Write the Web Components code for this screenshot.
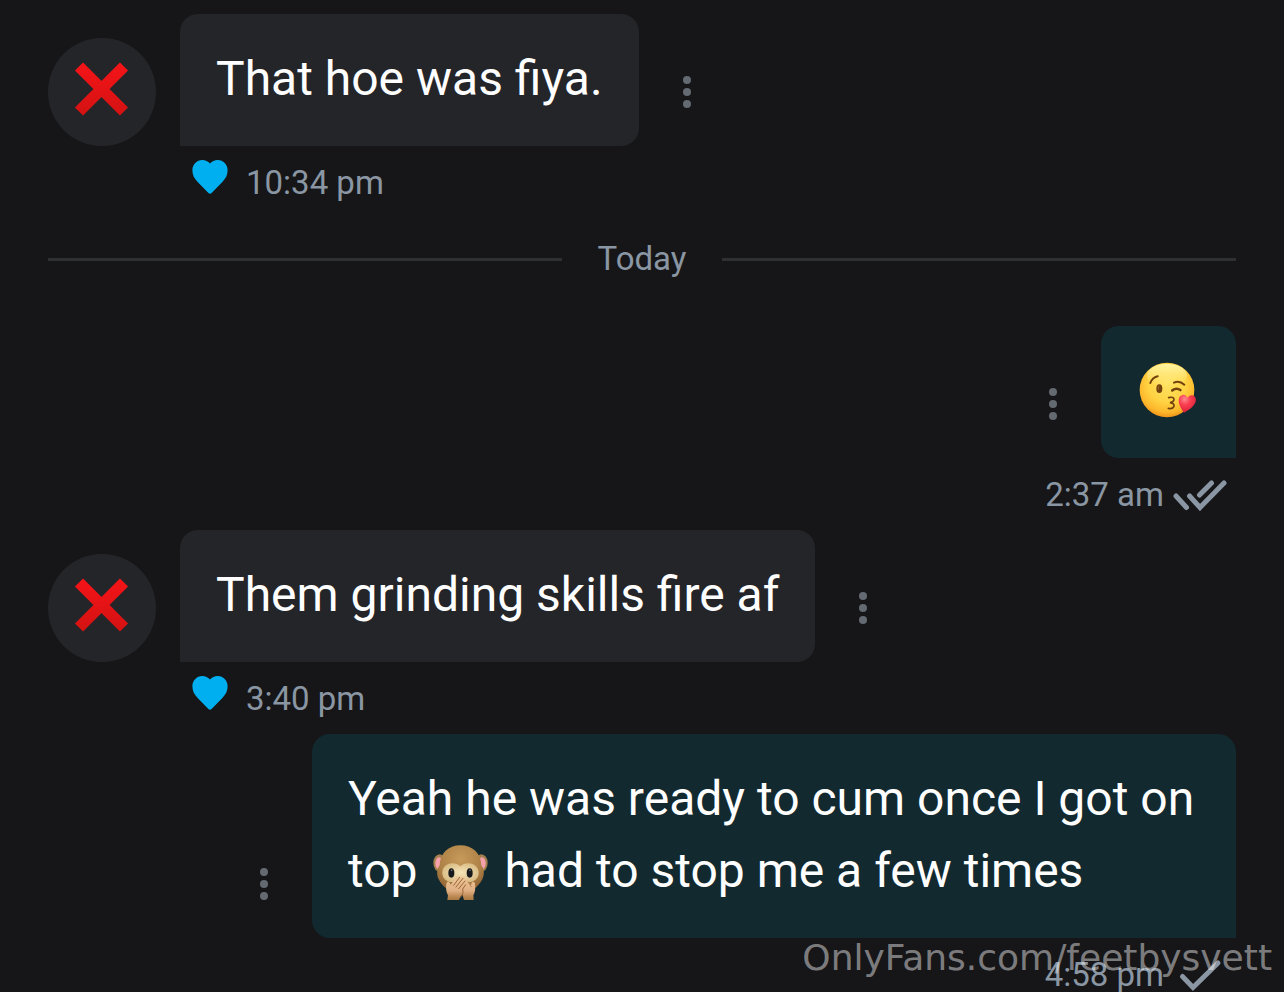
<!DOCTYPE html>
<html lang="en">
<head>
<meta charset="utf-8">
<meta name="viewport" content="width=device-width, initial-scale=1">
<title>Messages</title>
<style>
  body {
    margin: 0;
    background: #161618;
    color: #fefefe;
    font-family: Roboto, "Liberation Sans", sans-serif;
    --muted: #8a96a3;
    --accent: #00aff0;
    --bubble-in: #242529;
    --bubble-out: #132930;
    --line: #2e3034;
    --dots: #646a72;
  }
</style>
</head>
<body>

<chat-thread>
  <chat-message time="10:34 pm" liked>That hoe was fiya.</chat-message>
  <day-divider>Today</day-divider>
  <chat-message outgoing time="2:37 am" status="read"><chat-emoji name="kiss"></chat-emoji></chat-message>
  <chat-message time="3:40 pm" liked>Them grinding skills fire af</chat-message>
  <chat-message outgoing time="4:58 pm" status="sent">Yeah he was ready to cum once I got on top <chat-emoji name="monkey"></chat-emoji> had to stop me a few times</chat-message>
  <page-watermark slot="overlay">OnlyFans.com/feetbysvett</page-watermark>
</chat-thread>

<script>
/**
 * Chat Thread
 * Scroll area that stacks messages and dividers.
 */
class ChatThread extends HTMLElement {
  constructor() {
    super();
    this.attachShadow({ mode: 'open' });
  }

  connectedCallback() {
    this.shadowRoot.innerHTML = `
      <style>
        :host {
          display: block;
          position: relative;
          box-sizing: border-box;
          height: 100vh;
          overflow: hidden;
        }

        .list {
          display: flex;
          flex-direction: column;
          padding: 14px 48px 0;
        }
      </style>
      <main class="list"><slot></slot></main>
      <slot name="overlay"></slot>
    `;
  }
}

/**
 * Day Divider
 * Label between two horizontal rules.
 */
class DayDivider extends HTMLElement {
  constructor() {
    super();
    this.attachShadow({ mode: 'open' });
  }

  connectedCallback() {
    this.shadowRoot.innerHTML = `
      <style>
        :host {
          display: flex;
          align-items: center;
          gap: 36px;
          padding: 17px 0 43px;
          color: var(--muted);
          font-size: 33px;
          line-height: 48px;
        }

        .rule {
          flex: 1;
          height: 3px;
          background: var(--line);
        }
      </style>
      <span class="rule"></span>
      <slot></slot>
      <span class="rule"></span>
    `;
  }
}

/**
 * User Avatar
 * Round picture next to incoming messages.
 */
class UserAvatar extends HTMLElement {
  constructor() {
    super();
    this.attachShadow({ mode: 'open' });
  }

  connectedCallback() {
    this.shadowRoot.innerHTML = `
      <style>
        :host {
          display: block;
          flex: none;
          width: 108px;
          height: 108px;
          border-radius: 50%;
          background: var(--bubble-in);
        }

        svg {
          display: block;
        }
      </style>
      <svg width="108" height="108" viewBox="0 0 108 108" role="img" aria-label="Avatar">
        <defs>
          <linearGradient id="red" gradientUnits="userSpaceOnUse" x1="0" y1="25" x2="0" y2="78">
            <stop offset="0" stop-color="#f51418"/>
            <stop offset="1" stop-color="#d31212"/>
          </linearGradient>
        </defs>
        <path d="M31 28.5 76 73.5M76 28.5 31 73.5" stroke="url(#red)" stroke-width="11.5"/>
      </svg>
    `;
  }
}

/**
 * Chat Message
 * One bubble with its menu button and the line below it.
 *
 * Attributes: outgoing, liked, time, status ("sent" | "read")
 */
class ChatMessage extends HTMLElement {
  constructor() {
    super();
    this.attachShadow({ mode: 'open' });
  }

  connectedCallback() {
    this.render();
  }

  statusIcon() {
    const path = this.getAttribute('status') === 'read'
      ? 'M16.5 21 27 32.5 51 8M26.5 20 38.5 8M3 21 13.5 32.5'
      : 'M9.5 21.5 20 32.5 45 8';
    return `
      <svg class="status" width="54" height="36" viewBox="0 2 54 36" role="img" aria-label="${this.getAttribute('status')}">
        <path d="${path}" fill="none" stroke="currentColor" stroke-width="5" stroke-linecap="round"/>
      </svg>
    `;
  }

  render() {
    const outgoing = this.hasAttribute('outgoing');
    const liked = this.hasAttribute('liked');

    this.shadowRoot.innerHTML = `
      <style>
        :host {
          display: block;
        }

        .row {
          display: flex;
          align-items: flex-end;
        }

        .bubble {
          padding: 29px 36px 31px;
          border-radius: 18px 18px 18px 0;
          background: var(--bubble-in);
          font-size: 48px;
          line-height: 72px;
        }

        user-avatar {
          margin-right: 24px;
        }

        .menu {
          flex: none;
          display: flex;
          align-items: center;
          justify-content: center;
          width: 24px;
          height: 108px;
          margin: 0 36px;
          padding: 0;
          border: 0;
          background: none;
          color: var(--dots);
          cursor: pointer;
        }

        .meta {
          display: flex;
          align-items: center;
          padding: 13px 0 11px 144px;
          color: var(--muted);
          font-size: 33px;
          line-height: 48px;
        }

        .like {
          align-self: flex-start;
          margin-right: 18px;
          padding: 0;
          border: 0;
          background: none;
          color: var(--accent);
          cursor: pointer;
        }

        .like svg {
          display: block;
        }

        :host([outgoing]) .row {
          flex-direction: row-reverse;
          padding-left: 168px;
        }

        :host([outgoing]) .bubble {
          border-radius: 18px 18px 0 18px;
          background: var(--bubble-out);
        }

        :host([outgoing]) .meta {
          justify-content: flex-end;
          gap: 9px;
          padding: 13px 9px 11px 0;
        }
      </style>

      <div class="row">
        ${outgoing ? '' : '<user-avatar></user-avatar>'}
        <div class="bubble"><slot></slot></div>
        <button class="menu" type="button" aria-label="Message options">
          <svg width="8" height="32" viewBox="0 0 8 32" fill="currentColor">
            <circle cx="4" cy="4" r="4"/>
            <circle cx="4" cy="16" r="4"/>
            <circle cx="4" cy="28" r="4"/>
          </svg>
        </button>
      </div>
      <div class="meta">
        ${liked ? `
          <button class="like" type="button" aria-label="Like">
            <svg width="36" height="36" viewBox="0 1 36 36" fill="currentColor">
              <path d="M18 5.6C16 3.2 13.4 2 10.3 2 4.8 2 .4 6.5.4 12.2c0 4.5 1.7 8 5 11.5L16.4 34.9q1.6 1.5 3.2 0L30.6 23.7c3.3-3.5 5-7 5-11.5C35.6 6.500 31.2 2 25.7 2 22.6 2 20 3.2 18 5.6Z"/>
            </svg>
          </button>` : ''}
        <time>${this.getAttribute('time')}</time>
        ${outgoing ? this.statusIcon() : ''}
      </div>
    `;
  }
}

/**
 * Chat Emoji
 * Inline picture drawn at text size.
 */
const EMOJI = {
  kiss: {
    label: 'Face blowing a kiss',
    viewBox: '21 45 189 174',
    art: `
      <defs>
        <radialGradient id="skin" cx=".5" cy=".38" r=".63">
          <stop offset="0" stop-color="#ffe264"/>
          <stop offset=".55" stop-color="#ffd343"/>
          <stop offset=".84" stop-color="#fdb62b"/>
          <stop offset="1" stop-color="#ed8f16"/>
        </radialGradient>
        <linearGradient id="shine" x1="0" y1="0" x2="0" y2="1">
          <stop offset="0" stop-color="#fff8b0" stop-opacity=".9"/>
          <stop offset="1" stop-color="#fff08a" stop-opacity="0"/>
        </linearGradient>
        <radialGradient id="love" cx=".35" cy=".25" r=".8">
          <stop offset="0" stop-color="#ff8a90"/>
          <stop offset=".4" stop-color="#f93f50"/>
          <stop offset="1" stop-color="#d91d36"/>
        </radialGradient>
      </defs>
      <circle cx="111" cy="120" r="82" fill="url(#skin)"/>
      <ellipse cx="111" cy="76" rx="60" ry="34" fill="url(#shine)"/>
      <g fill="none" stroke="#71420d" stroke-width="6" stroke-linecap="round">
        <path d="M61 99Q67 83 83 79"/>
        <path d="M132 98Q148 91 163 104"/>
        <path d="M127 121Q139 112 151 120" stroke-width="8"/>
        <path d="M116 143Q132 139 132 149 131 156 120 158 134 160 132 169 128 178 115 175" stroke-width="5"/>
      </g>
      <ellipse cx="88" cy="116" rx="9" ry="13" fill="#71420d"/>
      <path d="M88 107q-5 4-3 12" fill="none" stroke="#a06b23" stroke-width="3"/>
      <path d="M162 188C151 174 140 151 150 139 159 130 170 134 172 144 178 133 193 133 197 145 202 161 181 179 162 188Z" fill="url(#love)"/>
    `
  },
  monkey: {
    label: 'Speak-no-evil monkey',
    viewBox: '14 30 189 174',
    art: `
      <defs>
        <radialGradient id="fur" cx=".5" cy=".3" r=".72">
          <stop offset="0" stop-color="#c69a5a"/>
          <stop offset=".65" stop-color="#ad8046"/>
          <stop offset="1" stop-color="#8a5e30"/>
        </radialGradient>
        <radialGradient id="mask" cx=".5" cy=".5" r=".6">
          <stop offset="0" stop-color="#f6e4b8"/>
          <stop offset="1" stop-color="#d7b980"/>
        </radialGradient>
        <linearGradient id="hand" gradientUnits="userSpaceOnUse" x1="0" y1="122" x2="0" y2="196">
          <stop offset="0" stop-color="#efc99a"/>
          <stop offset=".6" stop-color="#e0b084"/>
          <stop offset=".82" stop-color="#c08c58"/>
          <stop offset="1" stop-color="#a8763f"/>
        </linearGradient>
      </defs>
      <ellipse cx="46" cy="84" rx="19" ry="26" fill="#a4804e"/>
      <ellipse cx="171" cy="84" rx="19" ry="26" fill="#a4804e"/>
      <ellipse cx="44" cy="85" rx="11" ry="18" fill="#f5a0aa"/>
      <ellipse cx="173" cy="85" rx="11" ry="18" fill="#f5a0aa"/>
      <path d="M108 31C72 31 47 55 46 91 37 103 36 119 43 133 54 156 77 174 108 174 139 174 163 156 174 133 181 119 180 103 171 91 170 55 145 31 108 31Z" fill="url(#fur)"/>
      <path d="M108 94C91 77 56 84 54 111 53 127 63 137 76 141H140C154 137 164 127 163 111 161 84 125 77 108 94Z" fill="url(#mask)"/>
      <g fill="#17191d">
        <ellipse cx="81" cy="114" rx="9" ry="14"/>
        <ellipse cx="136" cy="114" rx="9" ry="14"/>
      </g>
      <circle cx="82" cy="106" r="2.5" fill="#7d7d80"/>
      <circle cx="137" cy="106" r="2.5" fill="#7d7d80"/>
      <path d="M148 195 147 181Q155 166 152 146 149 137 142 143L140 151 123 129Q117 125 112 130L110 165 119 195Z" fill="url(#hand)"/>
      <path d="M69 195 71 181Q63 166 66 146 69 137 76 143L79 149 97 126Q102 121 106 126 113 122 117 129 124 130 122 137 128 141 123 149L115 162Q118 178 108 186L104 195Z" fill="url(#hand)"/>
      <g fill="none" stroke="#9a6638" stroke-width="3" stroke-linecap="round">
        <path d="M106 127 88 151M116 130 95 156M122 138 103 161"/>
        <path d="M124 149 115 162Q119 178 108 187"/>
        <path d="M131 141 141 155" stroke-width="2"/>
      </g>
    `
  }
};

class ChatEmoji extends HTMLElement {
  constructor() {
    super();
    this.attachShadow({ mode: 'open' });
  }

  connectedCallback() {
    const emoji = EMOJI[this.getAttribute('name')];
    this.shadowRoot.innerHTML = `
      <style>
        :host {
          display: inline-block;
          width: 63px;
          height: 58px;
          line-height: 0;
          vertical-align: -16px;
        }

        svg {
          overflow: visible;
        }
      </style>
      <svg width="63" height="58" viewBox="${emoji.viewBox}" role="img" aria-label="${emoji.label}">
        ${emoji.art}
      </svg>
    `;
  }
}

/**
 * Page Watermark
 * Translucent label over the bottom right corner.
 */
class PageWatermark extends HTMLElement {
  constructor() {
    super();
    this.attachShadow({ mode: 'open' });
  }

  connectedCallback() {
    this.shadowRoot.innerHTML = `
      <style>
        :host {
          position: absolute;
          right: 12px;
          bottom: 12px;
          color: rgb(255 255 255 / 0.46);
          font-family: "DejaVu Sans", sans-serif;
          font-size: 36px;
          line-height: 44px;
          pointer-events: none;
        }
      </style>
      <slot></slot>
    `;
  }
}

customElements.define('chat-thread', ChatThread);
customElements.define('day-divider', DayDivider);
customElements.define('user-avatar', UserAvatar);
customElements.define('chat-message', ChatMessage);
customElements.define('chat-emoji', ChatEmoji);
customElements.define('page-watermark', PageWatermark);
</script>
</body>
</html>
